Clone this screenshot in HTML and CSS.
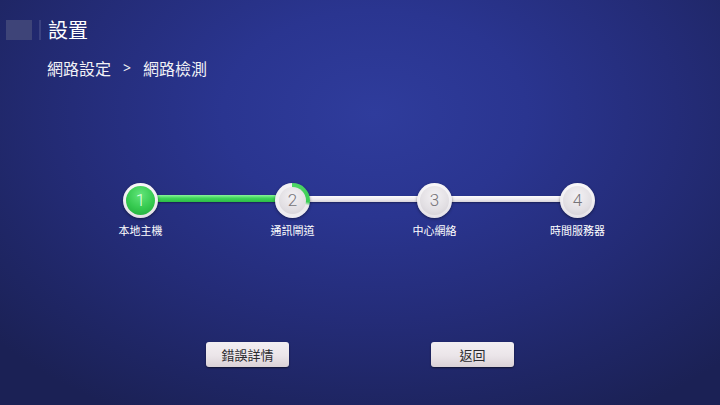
FILE: index.html
```html
<!DOCTYPE html>
<html lang="zh-Hant">
<head>
<meta charset="utf-8">
<title>設置</title>
<link rel="stylesheet" href="styles.css">
</head>
<body>
<div class="screen">
  <header class="top">
    <span class="logo"></span>
    <span class="divider"></span>
    <h1 class="title">設置</h1>
  </header>
  <nav class="crumbs">
    <span>網路設定</span>
    <span class="sep">&gt;</span>
    <span>網路檢測</span>
  </nav>
  <section class="stepper">
    <div class="step">
      <div class="dot done"><div class="disc"><span class="num">1</span></div></div>
      <div class="label">本地主機</div>
    </div>
    <div class="bar green bar-a"></div>
    <div class="step">
      <div class="dot active"><div class="disc"><span class="num">2</span></div></div>
      <div class="label">通訊閘道</div>
    </div>
    <div class="bar bar-b"></div>
    <div class="step">
      <div class="dot"><div class="disc"><span class="num">3</span></div></div>
      <div class="label">中心網絡</div>
    </div>
    <div class="bar bar-c"></div>
    <div class="step">
      <div class="dot"><div class="disc"><span class="num">4</span></div></div>
      <div class="label">時間服務器</div>
    </div>
  </section>
  <div class="actions">
    <button class="btn">錯誤詳情</button>
    <button class="btn">返回</button>
  </div>
</div>
</body>
</html>
```
FILE: styles.css
```css
html, body {
  margin: 0;
  padding: 0;
}
body {
  width: 720px;
  height: 405px;
  overflow: hidden;
  font-family: "Noto Sans CJK TC", "Noto Sans", sans-serif;
  color: #fff;
  background: radial-gradient(ellipse 70% 85% at 52% 28%, #2f3c9c 0%, #2a3590 30%, #242c78 60%, #1e2562 85%, #1b2155 100%);
}
.screen {
  width: 720px;
  height: 405px;
  display: flex;
  flex-direction: column;
}
.top {
  display: flex;
  align-items: center;
  margin-top: 20px;
  padding-left: 6px;
  height: 20px;
}
.logo {
  width: 26px;
  height: 20px;
  background: #3e4478;
}
.divider {
  width: 2px;
  height: 20px;
  margin-left: 7px;
  background: #3a4180;
}
.title {
  margin: 0 0 0 7px;
  font-size: 20px;
  line-height: 20px;
  font-weight: 400;
  color: #fff;
}
.crumbs {
  display: flex;
  margin-top: 20px;
  padding-left: 47px;
  font-size: 16px;
  line-height: 16px;
  color: #f2f2f6;
}
.crumbs .sep {
  margin: 0 12px 0 12px;
  font-family: "Noto Sans", sans-serif;
  font-size: 14px;
}
.stepper {
  display: flex;
  margin-top: 107px;
  margin-left: 123px;
  height: 56px;
}
.step {
  width: 35px;
  display: flex;
  flex-direction: column;
  align-items: center;
  position: relative;
  z-index: 1;
}
.dot {
  width: 35px;
  height: 35px;
  border-radius: 50%;
  box-sizing: border-box;
  padding: 3px;
  background: radial-gradient(circle at 50% 30%, #ffffff 0%, #f1eff2 55%, #d9d5db 100%);
  box-shadow: 0 1px 3px rgba(0, 0, 0, 0.45);
}
.dot.active {
  padding: 4px;
  background: conic-gradient(from 0deg, #4fd867 0deg, #3ccd55 95deg, #eceaed 108deg, #f4f2f5 360deg);
}
.disc {
  width: 100%;
  height: 100%;
  border-radius: 50%;
  display: flex;
  align-items: center;
  justify-content: center;
  background: radial-gradient(circle at 50% 35%, #f3f1f4 0%, #e2dfe3 60%, #cfcbd1 100%);
}
.dot.done .disc {
  background: radial-gradient(circle at 50% 30%, #62e57a 0%, #35c94f 55%, #1fa83a 100%);
}
.num {
  font-family: Roboto, "Noto Sans", sans-serif;
  font-weight: 300;
  font-size: 17px;
  line-height: 17px;
  color: #767479;
}
.dot.done .num {
  color: #dfffe4;
}
.label {
  margin-top: 6px;
  font-size: 11px;
  line-height: 13px;
  white-space: nowrap;
  color: #fff;
}
.bar {
  height: 6px;
  margin-top: 13px;
  margin-left: -4px;
  margin-right: -4px;
  background: linear-gradient(#fdfcfd, #ece9ed 60%, #d8d4da);
  box-shadow: 0 1px 2px rgba(0, 0, 0, 0.35);
}
.bar.green {
  height: 7px;
  margin-top: 12px;
  background: linear-gradient(#8af59a, #3fd65a 45%, #2cbd46);
}
.bar-a { width: 125px; }
.bar-b { width: 115px; }
.bar-c { width: 116px; }
.actions {
  display: flex;
  gap: 142px;
  margin-top: 103px;
  padding-left: 206px;
}
.btn {
  width: 83px;
  height: 25px;
  padding: 0;
  border: none;
  border-radius: 3px;
  font-family: "Noto Sans CJK TC", sans-serif;
  font-size: 13px;
  line-height: 25px;
  color: #2a2a2e;
  background: linear-gradient(#f3eff2 0%, #ebe5e9 55%, #d9d1d6 100%);
  box-shadow: 0 1px 2px rgba(0, 0, 0, 0.55);
}
```
